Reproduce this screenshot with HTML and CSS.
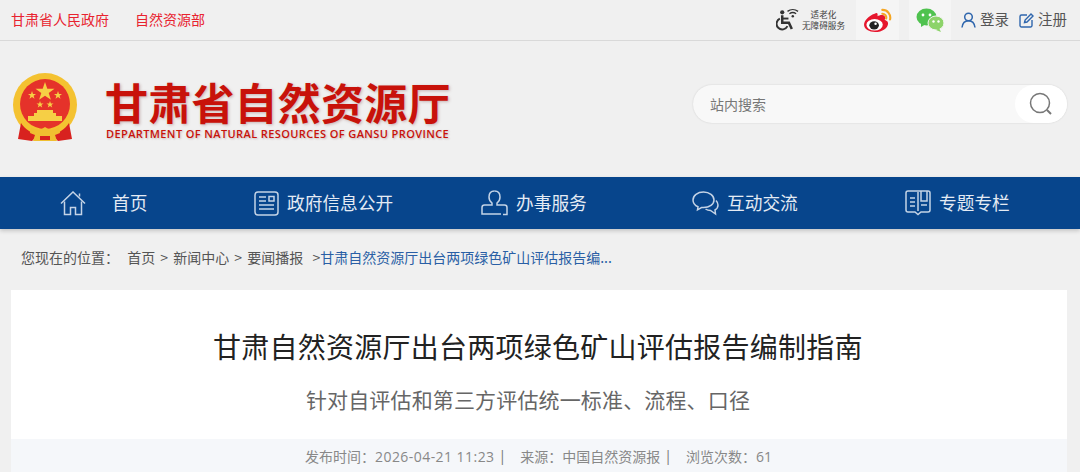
FILE: index.html
```html
<!DOCTYPE html>
<html>
<head>
    <title>甘肃省自然资源厅</title>
    <link rel="stylesheet" href="styles.css">
</head>
<body>
    <div class="topbar">
        <div class="toplinks">
            <a>甘肃省人民政府</a>
            <a>自然资源部</a>
        </div>
        <div class="topright">
            <div class="access">
                <svg width="23" height="25" viewBox="0 0 24 25" fill="none" stroke="#333">
                    <circle cx="6.500" cy="5" r="2.200" fill="#333" stroke="none"/>
                    <path d="M6.500 8v8h7l3 6.500" stroke-width="2.600"/>
                    <path d="M4 11.500a6 6 0 1 0 8 8" stroke-width="2"/>
                    <path d="M7 11.500h6" stroke-width="2"/>
                    <path d="M12 4a9 9 0 0 1 11 0M14 6.500a6 6 0 0 1 7 0" stroke-width="1.400"/>
                    <circle cx="17.500" cy="9" r="1.300" fill="#333" stroke="none"/>
                </svg>
                <div class="access-text">
                    <span>适老化</span>
                    <span>无障碍服务</span>
                </div>
            </div>
            <div class="tile tile-weibo">
                <svg width="29" height="25" viewBox="0 0 30 26">
                    <path d="M12 6C6 8 1 13 1 17.500C1 22 6.500 25 12.500 25C20 25 26 20.500 26 16C26 13.500 23.500 12.800 22.500 12.500C23.500 10 23 7.500 20 7.300C18 7.200 16 8 15 8.500C15.500 6 15 4.200 12 6Z" fill="#e6162d"/>
                    <ellipse cx="12" cy="17.500" rx="8.500" ry="6" fill="#fff"/>
                    <ellipse cx="11.500" cy="18" rx="5" ry="4.300" fill="#222"/>
                    <circle cx="13" cy="16.500" r="1.300" fill="#fff"/>
                    <path d="M20 2a8 8 0 0 1 8 10M20 6a4 4 0 0 1 4 5" fill="none" stroke="#f5a623" stroke-width="2.200" stroke-linecap="round"/>
                </svg>
            </div>
            <div class="tile tile-wechat">
                <svg width="28" height="24" viewBox="0 0 28 24">
                    <ellipse cx="10.500" cy="9" rx="10" ry="8.500" fill="#4fc24f"/>
                    <path d="M5 14l0 5 5-3z" fill="#4fc24f"/>
                    <circle cx="7" cy="7" r="1.400" fill="#fff"/>
                    <circle cx="14" cy="7" r="1.400" fill="#fff"/>
                    <ellipse cx="20" cy="15" rx="8" ry="7" fill="#8dd36a" stroke="#f5f5f5"/>
                    <path d="M23 20l2 4-5-2z" fill="#8dd36a"/>
                    <circle cx="17.500" cy="13.500" r="1.200" fill="#fff"/>
                    <circle cx="22.500" cy="13.500" r="1.200" fill="#fff"/>
                </svg>
            </div>
            <a class="userlink">
                <svg width="15" height="16" viewBox="0 0 15 16" fill="none" stroke="#2f66ad" stroke-width="1.500">
                    <circle cx="7.500" cy="5" r="3.800"/>
                    <path d="M1 15.500c.5-4 3-6.700 6.500-6.700s6 2.700 6.500 6.700"/>
                </svg>
                <span>登录</span>
            </a>
            <a class="userlink">
                <svg width="15" height="15" viewBox="0 0 15 15" fill="none" stroke="#2f66ad" stroke-width="1.400">
                    <path d="M8 2H2.500A1.500 1.500 0 0 0 1 3.500v9A1.500 1.500 0 0 0 2.500 14h9a1.500 1.500 0 0 0 1.500-1.500V7"/>
                    <path d="M5.500 9.500l.6-2.500L12 1l2 2-6 6z"/>
                </svg>
                <span>注册</span>
            </a>
        </div>
    </div>

    <div class="header">
        <div class="logo">
            <svg class="emblem" width="64" height="70" viewBox="0 0 64 70">
                <circle cx="32" cy="32" r="32" fill="#f4c231"/>
                <circle cx="32" cy="31" r="25" fill="#e5322a"/>
                <polygon points="32,9 34.300,15.800 41.500,15.800 35.700,20 37.900,26.800 32,22.700 26.100,26.800 28.300,20 22.500,15.800 29.700,15.800" fill="#f6cf45"/>
                <polygon points="19,18 20,21 23,21 20.600,22.800 21.500,25.800 19,24 16.500,25.800 17.400,22.800 15,21 18,21" fill="#f6cf45"/>
                <polygon points="45,18 46,21 49,21 46.600,22.800 47.500,25.800 45,24 42.500,25.800 43.400,22.800 41,21 44,21" fill="#f6cf45"/>
                <polygon points="27,28 27.900,30.500 30.500,30.500 28.400,32 29.200,34.500 27,33 24.800,34.500 25.600,32 23.500,30.500 26.100,30.500" fill="#f6cf45"/>
                <polygon points="37,28 37.900,30.500 40.500,30.500 38.400,32 39.200,34.500 37,33 34.800,34.500 35.600,32 33.500,30.500 36.100,30.500" fill="#f6cf45"/>
                <path d="M24 37h16v3h3v3h6v5H15v-5h6v-3h3z" fill="#f6cf45"/>
                <path d="M8 50L5 66l14 2 6-6c-7-2-13-6-17-12z" fill="#d8221f"/>
                <path d="M56 50l3 16-14 2-6-6c7-2 13-6 17-12z" fill="#d8221f"/>
                <path d="M18 54c3 2 6 3 9 3l5-3 5 3c3 0 6-1 9-3l1 6-5 2 2 6H20l2-6-5-2z" fill="#f0bf30"/>
                <rect x="27" y="63" width="10" height="4" fill="#d8221f"/>
            </svg>
            <div class="logo-text">
                <div class="logo-cn">甘肃省自然资源厅</div>
                <div class="logo-en">DEPARTMENT OF NATURAL RESOURCES OF GANSU PROVINCE</div>
            </div>
        </div>
        <div class="search">
            <span class="search-hint">站内搜索</span>
            <div class="search-btn">
                <svg width="24" height="24" viewBox="0 0 24 24" fill="none" stroke="#777" stroke-width="1.500">
                    <circle cx="11" cy="11" r="9.500"/>
                    <path d="M18 18l4 4" stroke-width="2"/>
                </svg>
            </div>
        </div>
    </div>

    <div class="nav">
        <a class="nav-item nav-home">
            <svg width="26" height="25" viewBox="0 0 26 25" fill="none" stroke="#c4d3e6" stroke-width="1.500">
                <path d="M1 12.500L13 1l12 11.500"/>
                <path d="M4.500 10.500V23.500h6v-7h5v7h6V10.500"/>
                <path d="M19.500 2.500v3"/>
            </svg>
            <span>首页</span>
        </a>
        <a class="nav-item">
            <svg width="25" height="25" viewBox="0 0 25 25" fill="none" stroke="#c4d3e6" stroke-width="1.500">
                <rect x="1" y="1" width="23" height="23" rx="3"/>
                <path d="M5 6h7M5 10h7M5 14h15M5 18h15"/>
                <rect x="15" y="5.500" width="5" height="4.500"/>
            </svg>
            <span>政府信息公开</span>
        </a>
        <a class="nav-item">
            <svg width="27" height="26" viewBox="0 0 27 26" fill="none" stroke="#c4d3e6" stroke-width="1.500">
                <path d="M13.500 1c3.500 0 5.500 2.500 5.500 6 0 3-1.500 5-3 6v2h7.500c1.500 0 2.500 1 2.500 2.500v7h-4"/>
                <path d="M13.500 1C10 1 8 3.500 8 7c0 3 1.500 5 3 6v2H3.500C2 15 1 16 1 17.500V24h19"/>
            </svg>
            <span>办事服务</span>
        </a>
        <a class="nav-item">
            <svg width="27" height="25" viewBox="0 0 27 25" fill="none" stroke="#c4d3e6" stroke-width="1.500">
                <path d="M11.500 1C5.500 1 1 4.500 1 9c0 3 2 5.500 5 6.800l-.5 3 4-2.300c.7.100 1.300.100 2 .100 6 0 10.500-3.400 10.500-7.600S17.500 1 11.500 1z"/>
                <path d="M24 9.500c1.300 1.300 2 2.800 2 4.500 0 2.200-1.200 4-3 5l.500 4-5-3.500c-2 0-3.500-.5-5-1.500"/>
            </svg>
            <span>互动交流</span>
        </a>
        <a class="nav-item">
            <svg width="26" height="26" viewBox="0 0 26 26" fill="none" stroke="#c4d3e6" stroke-width="1.500">
                <path d="M3 1h20a2 2 0 0 1 2 2v17a2 2 0 0 1-2 2h-7l-3 2.500-3-2.500H3a2 2 0 0 1-2-2V3a2 2 0 0 1 2-2z"/>
                <path d="M13 2v19M5 8h5M5 12h5M5 16h5M16 1v10h6V1M16 15h6"/>
            </svg>
            <span>专题专栏</span>
        </a>
    </div>

    <div class="crumbs">
        <span class="crumbs-label">您现在的位置：</span>
        <span class="crumbs-path">首页 &gt; 新闻中心 &gt; 要闻播报</span>
        <span class="crumbs-sep">&gt;</span><span class="crumbs-current">甘肃自然资源厅出台两项绿色矿山评估报告编...</span>
    </div>

    <div class="article">
        <h1>甘肃自然资源厅出台两项绿色矿山评估报告编制指南</h1>
        <h2>针对自评估和第三方评估统一标准、流程、口径</h2>
        <div class="meta">
            <span>发布时间：<span class="meta-date">2026-04-21 11:23</span></span><i>|</i>
            <span>来源：中国自然资源报</span><i>|</i>
            <span>浏览次数：61</span>
        </div>
    </div>
</body>
</html>
```
FILE: styles.css
```css
html, body {
    margin: 0;
    height: 472px;
    overflow: hidden;
}
body {
    background: #f0f0f0;
    font-family: "Noto Sans CJK SC", "Noto Sans", sans-serif;
    color: #555;
}
a {
    color: inherit;
    text-decoration: none;
}
.topbar {
    height: 40px;
    border-bottom: 1px solid #d9d9d9;
    display: flex;
    justify-content: space-between;
    padding: 0 13px 0 11px;
}
.toplinks {
    display: flex;
    gap: 26px;
    align-items: center;
    font-size: 14px;
    color: #e8232f;
    padding-bottom: 3px;
}
.topright {
    display: flex;
    align-items: center;
}
.access {
    display: flex;
    align-items: center;
    gap: 3px;
    margin-right: 11px;
    padding-bottom: 1px;
}
.access-text {
    display: flex;
    flex-direction: column;
    align-items: center;
    font-size: 8.6px;
    line-height: 11px;
    color: #444;
}
.tile {
    height: 40px;
    background: #f5f5f5;
    display: flex;
    align-items: center;
    justify-content: center;
}
.tile-weibo {
    width: 43px;
    margin-right: 10px;
}
.tile-wechat {
    width: 42px;
    margin-right: 10px;
}
.userlink {
    display: flex;
    align-items: center;
    gap: 4px;
    font-size: 14.5px;
    color: #555;
    margin-right: 10px;
}
.userlink span {
    margin-bottom: 3px;
}
.userlink:last-child {
    margin-right: 0;
}
.header {
    height: 136px;
    display: flex;
    justify-content: space-between;
    align-items: flex-start;
    padding: 0 13px;
}
.logo {
    display: flex;
    margin-top: 32px;
}
.emblem {
    margin-right: 28px;
}
.logo-text {
    padding-top: 2px;
}
.logo-cn {
    font-size: 43px;
    line-height: 52px;
    font-weight: 700;
    letter-spacing: 0.2px;
    color: #c8120a;
    text-shadow: 1px 1px 3px rgba(120, 60, 60, 0.35);
    white-space: nowrap;
}
.logo-en {
    font-family: "Open Sans", "Liberation Sans", sans-serif;
    font-size: 11px;
    line-height: 14px;
    font-weight: 600;
    letter-spacing: 0.39px;
    color: #c8120a;
    margin-left: 1px;
    white-space: nowrap;
    text-shadow: 1px 1px 2px rgba(120, 60, 60, 0.3);
}
.search {
    margin-top: 44px;
    width: 374px;
    height: 38px;
    box-sizing: border-box;
    border-radius: 19px;
    background: #f8f8f8;
    box-shadow: 0 0 2px rgba(0, 0, 0, 0.14);
    display: flex;
    justify-content: space-between;
    align-items: center;
    padding-left: 17px;
}
.search-hint {
    font-size: 14px;
    color: #777;
}
.search-btn {
    width: 52px;
    height: 38px;
    border-radius: 19px;
    background: #fff;
    display: flex;
    align-items: center;
    justify-content: center;
}
.nav {
    height: 52px;
    background: #07458c;
    box-shadow: 0 2px 4px rgba(0, 0, 0, 0.18);
    display: grid;
    grid-template-columns: 194px 227px 211px 213px 1fr;
    padding-left: 60px;
}
.nav-item {
    display: flex;
    align-items: center;
    gap: 8px;
    font-size: 17.7px;
    color: #e4ebf4;
    white-space: nowrap;
}
.nav-item span {
    margin-bottom: 2px;
}
.nav-home {
    gap: 26px;
}
.crumbs {
    height: 61px;
    box-sizing: border-box;
    padding: 19px 0 0 21px;
    font-size: 14px;
    line-height: 19px;
    color: #555;
    white-space: nowrap;
}
.crumbs-label {
    margin-right: 5px;
}
.crumbs-path {
    word-spacing: 2px;
}
.crumbs-sep {
    margin-left: 6px;
}
.crumbs-current {
    color: #2a5fa5;
}
.article {
    margin: 0 13px 0 11px;
    height: 182px;
    background: #fff;
    display: flex;
    flex-direction: column;
    align-items: center;
}
h1 {
    margin: 36px 2px 0 0;
    font-size: 28px;
    line-height: 40px;
    font-weight: 400;
    letter-spacing: 0.25px;
    color: #222;
}
h2 {
    margin: 18px 22px 0 0;
    font-size: 21px;
    line-height: 30px;
    font-weight: 400;
    letter-spacing: 0.15px;
    color: #666;
}
.meta {
    margin-top: 25px;
    align-self: stretch;
    flex: 1;
    background: #f5f7fa;
    display: flex;
    justify-content: center;
    align-items: center;
    font-family: "Open Sans", "Noto Sans CJK SC", sans-serif;
    font-size: 14px;
    color: #888;
    padding-right: 1px;
}
.meta-date {
    letter-spacing: 0.45px;
}
.meta i {
    font-style: normal;
    margin: 0 14px 0 4px;
    color: #777;
}
```
